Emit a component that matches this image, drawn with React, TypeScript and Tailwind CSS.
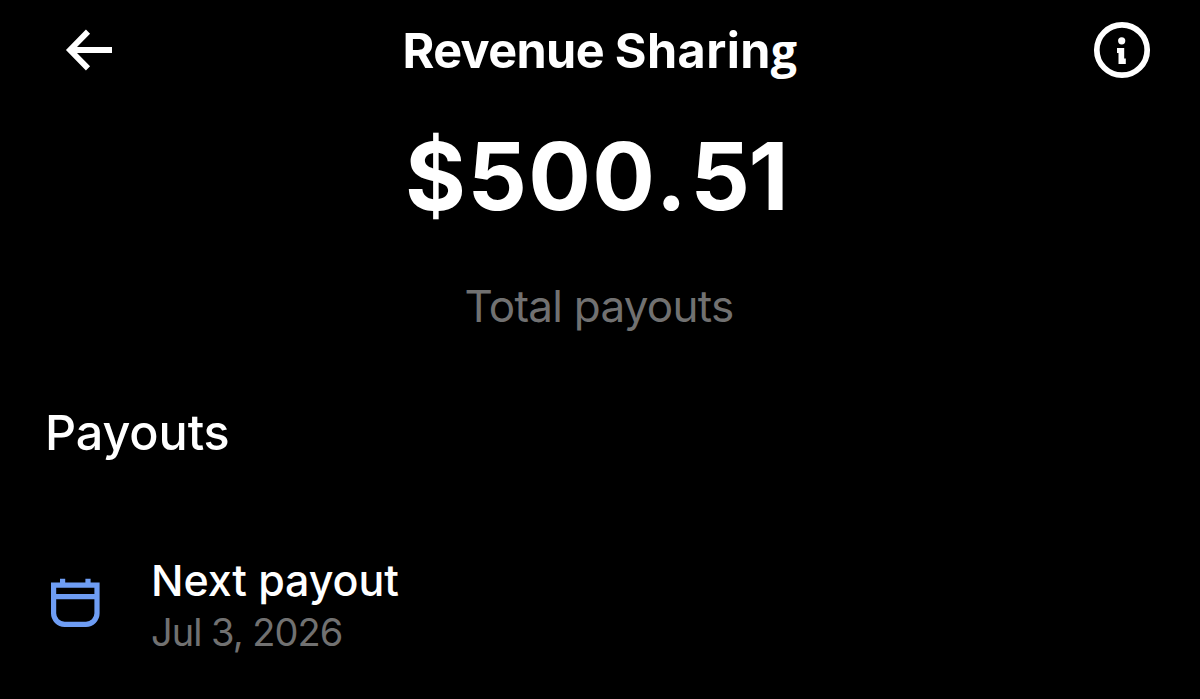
function BackArrow() {
  return (
    <svg className="h-[44px] w-[48px] shrink-0" viewBox="0 0 48 44" fill="none" stroke="#fff" strokeWidth="5.8">
      <path d="M23 3.6 5 22l18 18.4" />
      <path d="M5 22h42" />
    </svg>
  );
}

function InfoIcon() {
  return (
    <svg className="size-[58px]" viewBox="0 0 58 58">
      <circle cx="29" cy="29" r="25.2" fill="none" stroke="#fff" strokeWidth="5.7" />
      <circle cx="28.7" cy="19.8" r="3.6" fill="#fff" />
      <path d="M24 27h7.2v10.6h1.6v5.4h-7.3V32H24z" fill="#fff" />
    </svg>
  );
}

function CalendarIcon() {
  return (
    <svg className="h-[50px] w-[50px]" viewBox="0 0 50 50" fill="none" stroke="#6e9df4" strokeWidth="5.2">
      <path d="M3.6 7.2h43.4V35.3a11 11 0 0 1-11 11h-21.4a11 11 0 0 1-11-11z" />
      <path d="M3.6 18.7h43.4M12.6 0.7v6M38 0.7v6" />
    </svg>
  );
}

export default function App() {
  return (
    <main className="h-[699px] w-full overflow-hidden bg-black font-['Inter',sans-serif] text-white">
      <header className="flex h-[100px] items-center justify-between pr-[49px] pl-[65px]">
        <button aria-label="Back" className="flex w-[42px]">
          <BackArrow />
        </button>
        <h1 className="pt-[2px] text-[48.5px] leading-none font-bold tracking-[0.4px] whitespace-nowrap">
          <span className="tracking-[-0.6px]">Revenue </span>Sharin<span className="font-['Open_Sans',sans-serif] text-[46.5px] leading-none">g</span>
        </h1>
        <button aria-label="Information" className="flex">
          <InfoIcon />
        </button>
      </header>
      <section className="text-center">
        <p className="pr-[5px] text-[93px] leading-[152px] font-bold tracking-[1.4px]">
          $50<span className="tracking-[3.5px]">0.</span>
          <span className="tracking-[-1.5px]">5</span>1
        </p>
        <p className="pr-[2px] text-[44px] leading-[108px] tracking-[-0.75px] text-[#717171]">Total payouts</p>
      </section>
      <section className="pl-[45px]">
        <h2 className="text-[48.5px] leading-[146px] font-medium tracking-[-0.1px]">Payouts</h2>
        <div className="flex pt-[48px]">
          <div className="w-[106px] pt-[24px] pl-[5px]">
            <CalendarIcon />
          </div>
          <div>
            <h3 className="text-[43px] leading-[52px] font-medium tracking-[-0.1px]">Next payout</h3>
            <p className="text-[38px] leading-[52px] tracking-[-1px] text-[#717171]">Jul 3, 2026</p>
          </div>
        </div>
      </section>
    </main>
  );
}
